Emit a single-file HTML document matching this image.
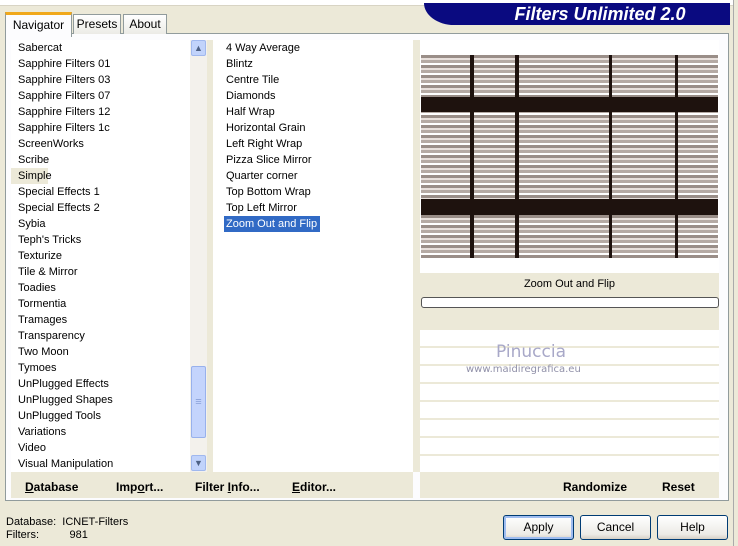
<!DOCTYPE html><html><head><style>
body{margin:0;width:738px;height:546px;background:#ece9d8;font-family:"Liberation Sans",sans-serif;font-size:11px;position:relative;overflow:hidden;color:#000}
.a{position:absolute}
.tab{position:absolute;top:14px;height:19px;border:1px solid #919b9c;border-bottom:none;background:linear-gradient(#fff,#ecebe6);text-align:center;line-height:19px;font-size:12px}
.list div{height:16px;line-height:16px;padding-left:7px;white-space:nowrap}
.m div{padding-left:13px}
.btn{position:absolute;top:515px;width:69px;height:23px;border:1px solid #003c74;border-radius:3px;background:linear-gradient(#fff,#ecebe6 80%,#d6d0c5);text-align:center;line-height:23px;font-size:12px}
.bb{position:absolute;top:480px;font-weight:bold;font-size:12px}
</style></head><body>
<div class="a" style="left:0;top:0;width:738px;height:5px;background:#fff;border-bottom:1px solid #d8d4c4"></div>
<div class="a" style="left:424px;top:3px;width:306px;height:22px;background:#0a0a80;border-bottom-left-radius:30px 22px"></div>
<div class="a" style="left:470px;top:3px;width:260px;height:22px;color:#fff;font-weight:bold;font-style:italic;font-size:18px;line-height:22px;text-align:center">Filters Unlimited 2.0</div>
<div class="a" style="left:5px;top:33px;width:722px;height:466px;border:1px solid #919b9c;background:#fcfcfe"></div>
<div class="tab" style="left:5px;top:12px;width:65px;height:22px;background:#fcfcfe;border-top:3px solid #f0a81c;line-height:20px">Navigator</div>
<div class="tab" style="left:73px;width:46px">Presets</div>
<div class="tab" style="left:123px;width:42px">About</div>
<div class="a list" style="left:11px;top:40px;width:179px;height:432px;background:#fff">
<div>Sabercat</div><div>Sapphire Filters 01</div><div>Sapphire Filters 03</div><div>Sapphire Filters 07</div><div>Sapphire Filters 12</div><div>Sapphire Filters 1c</div><div>ScreenWorks</div><div>Scribe</div><div style="background:#ece9d8;width:30px">Simple</div><div>Special Effects 1</div><div>Special Effects 2</div><div>Sybia</div><div>Teph's Tricks</div><div>Texturize</div><div>Tile &amp; Mirror</div><div>Toadies</div><div>Tormentia</div><div>Tramages</div><div>Transparency</div><div>Two Moon</div><div>Tymoes</div><div>UnPlugged Effects</div><div>UnPlugged Shapes</div><div>UnPlugged Tools</div><div>Variations</div><div>Video</div><div>Visual Manipulation</div></div>
<div class="a" style="left:190px;top:40px;width:17px;height:432px;background:#f3f1ec"></div>
<div class="a" style="left:191px;top:40px;width:15px;height:16px;background:#c1d3fb;border:1px solid #a0b8ee;border-radius:2px;box-sizing:border-box;text-align:center;font-size:9px;line-height:14px;color:#4d6185">▲</div>
<div class="a" style="left:191px;top:366px;width:15px;height:72px;background:#c4d4fc;border:1px solid #98b1ec;border-radius:2px;box-sizing:border-box;text-align:center;line-height:70px;color:#8aa0d8">≡</div>
<div class="a" style="left:191px;top:455px;width:15px;height:16px;background:#c1d3fb;border:1px solid #a0b8ee;border-radius:2px;box-sizing:border-box;text-align:center;font-size:9px;line-height:14px;color:#4d6185">▼</div>
<div class="a" style="left:207px;top:40px;width:6px;height:432px;background:#ece9d8"></div>
<div class="a list m" style="left:213px;top:40px;width:200px;height:432px;background:#fff">
<div>4 Way Average</div><div>Blintz</div><div>Centre Tile</div><div>Diamonds</div><div>Half Wrap</div><div>Horizontal Grain</div><div>Left Right Wrap</div><div>Pizza Slice Mirror</div><div>Quarter corner</div><div>Top Bottom Wrap</div><div>Top Left Mirror</div><div style="padding:0"><span style="display:inline-block;margin-left:11px;padding:0 3px 0 2px;background:#316ac5;color:#fff">Zoom Out and Flip</span></div></div>
<div class="a" style="left:413px;top:40px;width:7px;height:432px;background:#ece9d8"></div>
<div class="a" style="left:420px;top:40px;width:299px;height:233px;background:#fff"></div>
<div class="a" style="left:421px;top:55px;width:297px;height:203px;background:repeating-linear-gradient(#9a8e88 0 3px,#e8e0dc 3px 5px,#b5aaa4 5px 8px,#fff 8px 10px)"></div>
<div class="a" style="left:421px;top:97px;width:297px;height:15px;background:#1e120e"></div>
<div class="a" style="left:421px;top:199px;width:297px;height:16px;background:#1e120e"></div>
<div class="a" style="left:470px;top:55px;width:4px;height:203px;background:#1e120e"></div>
<div class="a" style="left:515px;top:55px;width:4px;height:203px;background:#1e120e"></div>
<div class="a" style="left:609px;top:55px;width:3px;height:203px;background:#1e120e"></div>
<div class="a" style="left:675px;top:55px;width:3px;height:203px;background:#1e120e"></div>
<div class="a" style="left:420px;top:273px;width:299px;height:57px;background:#ece9d8"></div>
<div class="a" style="left:420px;top:278px;width:299px;text-align:center;font-size:11px">Zoom Out and Flip</div>
<div class="a" style="left:421px;top:297px;width:296px;height:9px;border:1px solid #555;border-radius:3px;background:#fff"></div>
<div class="a" style="left:420px;top:330px;width:299px;height:142px;background:repeating-linear-gradient(#fff 0 16px,#ece9d8 16px 18px)"></div>
<div class="a" style="left:496px;top:342px;font-family:'DejaVu Sans',sans-serif;font-size:17px;color:#a8a8c8">Pinuccia</div>
<div class="a" style="left:466px;top:364px;font-family:'DejaVu Sans',sans-serif;font-size:10px;color:#9090a8">www.maidiregrafica.eu</div>
<div class="a" style="left:11px;top:472px;width:402px;height:26px;background:#ece9d8"></div>
<div class="a" style="left:420px;top:472px;width:299px;height:26px;background:#ece9d8"></div>
<div class="bb" style="left:25px"><u>D</u>atabase</div>
<div class="bb" style="left:116px">Imp<u>o</u>rt...</div>
<div class="bb" style="left:195px">Filter <u>I</u>nfo...</div>
<div class="bb" style="left:292px"><u>E</u>ditor...</div>
<div class="bb" style="left:563px">Randomize</div>
<div class="bb" style="left:662px">Reset</div>
<div class="a" style="left:6px;top:516px;line-height:13px">Database:&nbsp;&nbsp;ICNET-Filters<br>Filters:&nbsp;&nbsp;&nbsp;&nbsp;&nbsp;&nbsp;&nbsp;&nbsp;&nbsp;&nbsp;981</div>
<div class="btn" style="left:503px;box-shadow:inset 0 0 0 2px #9fbdf0">Apply</div>
<div class="btn" style="left:580px">Cancel</div>
<div class="btn" style="left:657px">Help</div>
<div class="a" style="left:733px;top:0;width:5px;height:546px;background:#ece9d8;border-left:1px solid #aaa"></div>
</body></html>
